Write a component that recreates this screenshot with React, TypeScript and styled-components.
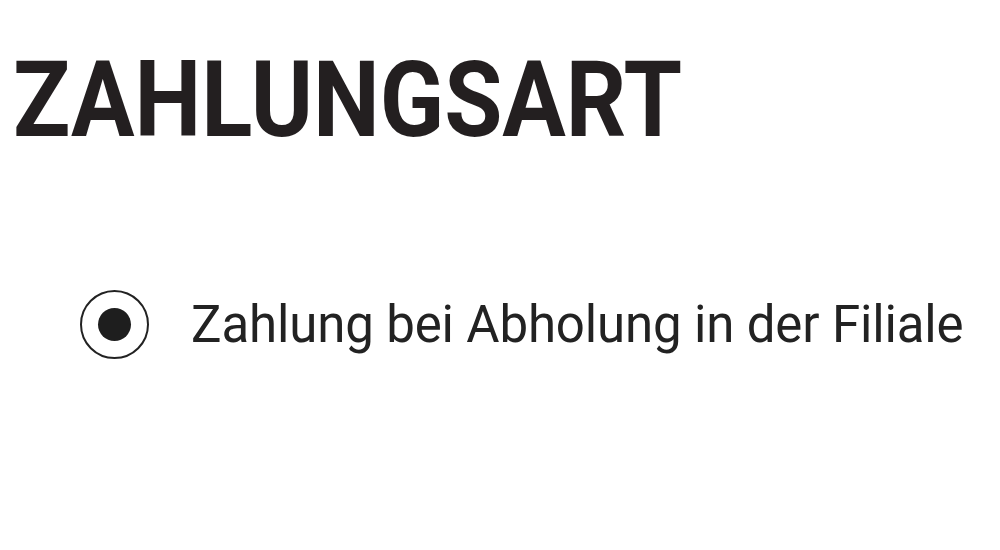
import React from "react";
import styled, { createGlobalStyle } from "styled-components";

const Global = createGlobalStyle`
  html, body { margin: 0; padding: 0; background: #fff; }
  body { font-family: Roboto, "Liberation Sans", sans-serif; color: #222; }
`;

const Page = styled.div`
  width: 1000px;
  height: 550px;
  overflow: hidden;
  display: flex;
  flex-direction: column;
  padding: 0 0 0 13px;
  box-sizing: border-box;
`;

const Title = styled.h1`
  margin: 46px 0 0 0;
  font-family: Roboto, sans-serif;
  font-weight: 700;
  font-size: 105px;
  line-height: 110px;
  color: #231f20;
  letter-spacing: 0;
  transform: scaleX(0.9);
  transform-origin: left center;
  white-space: nowrap;
`;

const Option = styled.label`
  display: flex;
  align-items: center;
  gap: 42px;
  margin: 134px 0 0 67px;
`;

const Radio = styled.span`
  width: 65px;
  height: 65px;
  border: 2px solid #222;
  border-radius: 50%;
  display: flex;
  align-items: center;
  justify-content: center;
  flex-shrink: 0;
  &::after {
    content: "";
    width: 33px;
    height: 33px;
    border-radius: 50%;
    background: #1e1e1e;
  }
`;

const Label = styled.span`
  font-family: Roboto, sans-serif;
  font-size: 51px;
  letter-spacing: -0.15px;
  color: #222;
  white-space: nowrap;
`;

export default function App() {
  return (
    <>
      <Global />
      <Page>
        <Title>ZAHLUNGSART</Title>
        <Option>
          <Radio />
          <Label>Zahlung bei Abholung in der Filiale</Label>
        </Option>
      </Page>
    </>
  );
}
